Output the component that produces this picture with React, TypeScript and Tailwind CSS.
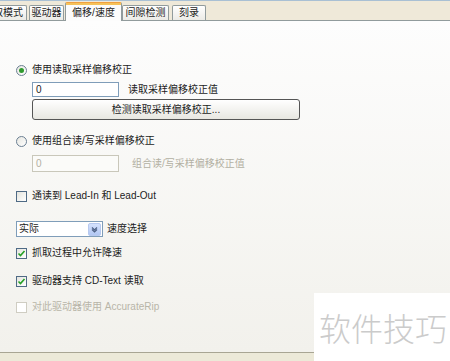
import React from "react";

function Radio({ checked }: { checked?: boolean }) {
  return (
    <div className="flex h-[11px] w-[11px] shrink-0 items-center justify-center rounded-full border border-[#6b7f93] bg-gradient-to-br from-[#e6e6e0] to-white">
      {checked && <div className="h-[5px] w-[5px] rounded-full bg-[#2f9a2f]" />}
    </div>
  );
}

function Check({ checked, disabled }: { checked?: boolean; disabled?: boolean }) {
  return (
    <div
      className={
        disabled
          ? "flex h-[11px] w-[11px] shrink-0 items-center justify-center border border-[#cfcdc2] bg-white"
          : "flex h-[11px] w-[11px] shrink-0 items-center justify-center border border-[#4f6a85] bg-gradient-to-br from-[#e4e4de] to-white"
      }
    >
      {checked && (
        <svg width="9" height="9" viewBox="0 0 9 9">
          <path d="M1.5 4.5 L3.5 6.5 L7.5 2" fill="none" stroke="#25a025" strokeWidth="1.6" />
        </svg>
      )}
    </div>
  );
}

export default function App() {
  return (
    <div className="relative h-[361px] w-[450px] overflow-hidden bg-[#ece9d8] font-['Liberation_Sans','Noto_Sans_CJK_SC',sans-serif] text-[10px] leading-none text-[#1c1c1c]">
      <div className="h-px bg-[#a9c0d4]" />
      <div className="flex h-[20px] items-end border-b border-[#919b9c] bg-[#efe9d9]">
        <div className="ml-[-21px] flex h-[15px] w-[48px] items-center justify-center rounded-t-[2px] border border-b-0 border-[#919b9c] bg-gradient-to-b from-white to-[#ecebe6]">
          读取模式
        </div>
        <div className="ml-[2px] flex h-[15px] w-[35px] items-center justify-center rounded-t-[2px] border border-b-0 border-[#919b9c] bg-gradient-to-b from-white to-[#ecebe6]">
          驱动器
        </div>
        <div className="relative -mb-px ml-px flex h-[19px] w-[57px] items-center justify-center rounded-t-[2px] border border-b-0 border-[#919b9c] border-t-[#f0a040] bg-[#fcfcfc] pt-[1px]">
          <div className="absolute left-0 right-0 top-0 h-[2px] bg-[#f5c25a]" />
          偏移/速度
        </div>
        <div className="flex h-[15px] w-[47px] items-center justify-center rounded-t-[2px] border border-b-0 border-[#919b9c] bg-gradient-to-b from-white to-[#ecebe6]">
          间隙检测
        </div>
        <div className="ml-[3px] flex h-[15px] w-[34px] items-center justify-center rounded-t-[2px] border border-b-0 border-[#919b9c] bg-gradient-to-b from-white to-[#ecebe6]">
          刻录
        </div>
      </div>

      <div className="flex h-[332px] flex-col border-b border-[#a8a593] bg-gradient-to-b from-[#fdfdfd] to-[#f2f1ec] pl-4">
        <div className="mt-[42px] flex h-[14px] items-center">
          <Radio checked />
          <span className="ml-[5px]">使用读取采样偏移校正</span>
        </div>
        <div className="ml-4 mt-[5px] flex h-[15px] items-center">
          <div className="flex h-[15px] w-[87px] items-center border border-[#7f9db9] bg-white pl-[3px]">0</div>
          <span className="ml-[9px]">读取采样偏移校正值</span>
        </div>
        <div className="ml-4 mt-[2px] flex h-[21px] w-[268px] items-center justify-center rounded-[3px] border border-[#555] bg-gradient-to-b from-white to-[#e8e7e1]">
          检测读取采样偏移校正...
        </div>

        <div className="mt-[14px] flex h-[14px] items-center">
          <Radio />
          <span className="ml-[5px]">使用组合读/写采样偏移校正</span>
        </div>
        <div className="ml-4 mt-[7px] flex h-[17px] items-center text-[#b3b0a3]">
          <div className="flex h-[17px] w-[87px] items-center border border-[#c9c7ba] bg-[#fbfbf9] pl-[3px]">0</div>
          <span className="ml-[13px]">组合读/写采样偏移校正值</span>
        </div>

        <div className="mt-[17px] flex h-[14px] items-center">
          <Check />
          <span className="ml-[5px]">通读到 Lead-In 和 Lead-Out</span>
        </div>

        <div className="mt-[18px] flex h-[16px] items-center">
          <div className="flex h-[16px] w-[87px] items-center justify-between border border-[#7f9db9] bg-white pl-[2px] pr-px">
            <span>实际</span>
            <div className="flex h-[13px] w-[13px] items-center justify-center rounded-[2px] border border-[#b7c9ef] bg-gradient-to-b from-[#d5e2fd] to-[#b2c7f3]">
              <svg width="9" height="9" viewBox="0 0 9 9">
                <path d="M2 2.5 L4.5 5 L7 2.5 M2 4.5 L4.5 7 L7 4.5" fill="none" stroke="#4d6185" strokeWidth="1.2" />
              </svg>
            </div>
          </div>
          <span className="ml-[4px]">速度选择</span>
        </div>

        <div className="mt-[9px] flex h-[14px] items-center">
          <Check checked />
          <span className="ml-[5px]">抓取过程中允许降速</span>
        </div>
        <div className="mt-[14px] flex h-[14px] items-center">
          <Check checked />
          <span className="ml-[5px]">驱动器支持 CD-Text 读取</span>
        </div>
        <div className="mt-[12px] flex h-[14px] items-center text-[#b8b5a8]">
          <Check disabled />
          <span className="ml-[5px]">对此驱动器使用 AccurateRip</span>
        </div>
      </div>

      <div className="absolute left-[314px] top-[293px] flex h-[68px] w-[136px] items-center bg-white pl-[5px] font-['Noto_Sans_CJK_SC',sans-serif] text-[32px] font-light text-[#cbcbcb]">
        软件技巧
      </div>
    </div>
  );
}
